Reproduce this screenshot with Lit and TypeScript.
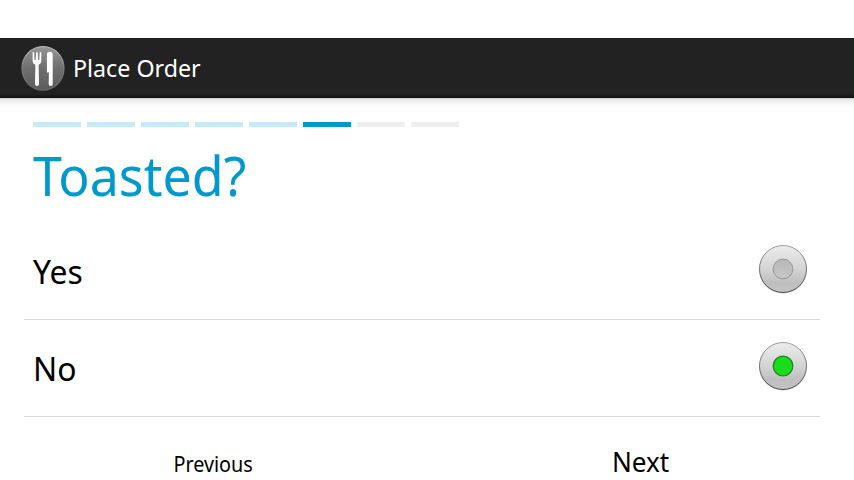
import { LitElement, html, css, svg } from "lit";
import { customElement, property, state } from "lit/decorators.js";
import { classMap } from "lit/directives/class-map.js";

@customElement("order-radio")
class OrderRadio extends LitElement {
  @property({ type: Boolean }) checked = false;

  static styles = css`
    :host { display: block; width: 50px; height: 52px; }
    svg { display: block; }
  `;

  render() {
    return html`<svg width="50" height="52" viewBox="0 0 50 52">
      <defs>
        <linearGradient id="face" x1="0" y1="0" x2="0" y2="1">
          <stop offset="0" stop-color="#ececec" />
          <stop offset="0.5" stop-color="#d4d4d4" />
          <stop offset="0.8" stop-color="#bebebe" />
          <stop offset="1" stop-color="#c4c4c4" />
        </linearGradient>
        <linearGradient id="rim" x1="0" y1="0" x2="0" y2="1">
          <stop offset="0" stop-color="#a0a0a0" />
          <stop offset="1" stop-color="#505050" />
        </linearGradient>
        <linearGradient id="well" x1="0" y1="0" x2="0" y2="1">
          <stop offset="0" stop-color="#b8b8b8" />
          <stop offset="1" stop-color="#c6c6c6" />
        </linearGradient>
      </defs>
      <circle cx="25" cy="26.5" r="23.9" fill="#000" opacity="0.25" />
      <circle cx="25" cy="26" r="23.5" fill="url(#face)" stroke="url(#rim)" stroke-width="1" />
      ${this.checked
        ? svg`<circle cx="25" cy="26" r="9.8" fill="#1bdb1f" stroke="#1a8a1c" stroke-width="1.3" />`
        : svg`<circle cx="25" cy="26" r="9.9" fill="url(#well)" stroke="#989898" stroke-width="1" />`}
    </svg>`;
  }
}

@customElement("app-root")
class AppRoot extends LitElement {
  @state() private answer = "No";
  private step = 5;
  private total = 8;

  static styles = css`
    :host {
      display: flex;
      flex-direction: column;
      box-sizing: border-box;
      width: 854px;
      height: 480px;
      padding-top: 38px;
      overflow: hidden;
      background: #fff;
      color: #000;
      font-family: "Noto Sans", "Open Sans", sans-serif;
    }
    .bar {
      display: flex;
      align-items: center;
      flex: none;
      box-sizing: border-box;
      height: 60px;
      padding-left: 21px;
      background: linear-gradient(#1a1a1a 0, #222 1px, #222 56px, #191919 58px, #141414 60px);
      color: #fff;
    }
    .logo { width: 44px; height: 46px; margin-right: 8px; }
    .bar-title {
      font-size: 24px;
      line-height: 34px;
      transform: scaleX(0.968);
      transform-origin: left;
    }
    .shade {
      flex: none;
      height: 12px;
      background: linear-gradient(#b5b5b5 0, #e2e2e2 1px, #eee 3px, #fafafa 7px, #fff 12px);
    }
    .steps { display: flex; gap: 6px; flex: none; margin: 12px 0 0 33px; }
    .step { width: 48px; height: 5px; background: #eee; }
    .done { background: #c5eaf8; }
    .now { background: #0099cc; }
    .question {
      flex: none;
      margin: 18px 0 18px 33px;
      font-size: 54px;
      line-height: 60px;
      font-weight: 400;
      color: #0099cc;
      transform: scaleX(0.962);
      transform-origin: left;
    }
    .row {
      display: flex;
      align-items: center;
      justify-content: space-between;
      flex: none;
      height: 96px;
      margin: 0 34px 0 24px;
      padding: 0 12px 0 9px;
      border-bottom: 1px solid #d9d9d9;
    }
    .label {
      padding-top: 2px;
      font-size: 33px;
      line-height: 46px;
      transform: scaleX(0.965);
      transform-origin: left;
    }
    .radio { margin-bottom: 4px; }
    .foot {
      display: grid;
      grid-template-columns: 1fr 1fr;
      align-items: baseline;
      justify-items: center;
      padding-top: 25px;
      line-height: 40px;
    }
    .prev { font-size: 21px; transform: scaleX(0.943); }
    .next { font-size: 27px; transform: scaleX(0.968); }
  `;

  render() {
    return html`
      <header class="bar">
        <svg class="logo" viewBox="0 0 44 46">
          <defs>
            <linearGradient id="disc" x1="0" y1="0" x2="0" y2="1">
              <stop offset="0" stop-color="#979797" />
              <stop offset="0.5" stop-color="#6e6e6e" />
              <stop offset="1" stop-color="#5c5c5c" />
            </linearGradient>
            <linearGradient id="edge" x1="0" y1="0" x2="0" y2="1">
              <stop offset="0" stop-color="#bcbcbc" />
              <stop offset="0.5" stop-color="#808080" />
              <stop offset="1" stop-color="#666" />
            </linearGradient>
          </defs>
          <ellipse cx="22" cy="23.3" rx="21" ry="21.8" fill="url(#disc)" stroke="url(#edge)" stroke-width="1.2" />
          <path fill="#fff" d="M11.6 7.5q.8-.8 1.6 0l.3 7.5h1.2l.4-7.5q.8-.8 1.6 0l.4 7.5h1.2l.4-7.5q.8-.8 1.6 0V15.500q0 3.200-2.700 4.200L18 39.300q-.2 1.700-2 1.700t-2-1.700l.4-19.600q-2.800-1-2.800-4.200Z" />
          <path fill="#fff" d="M25.900 9.500q0-2.700 2.900-2.700 2.900 0 2.900 2.900V39.200q0 1.800-2 1.800t-2-1.800l.2-11.600h-2Z" />
        </svg>
        <span class="bar-title">Place Order</span>
      </header>
      <div class="shade"></div>
      <div class="steps">
        ${Array.from({ length: this.total }, (_, i) => html`
          <div class=${classMap({ step: true, done: i < this.step, now: i === this.step })}></div>`)}
      </div>
      <h1 class="question">Toasted?</h1>
      ${["Yes", "No"].map((option) => html`
        <div class="row" @click=${() => (this.answer = option)}>
          <span class="label">${option}</span>
          <order-radio class="radio" ?checked=${this.answer === option}></order-radio>
        </div>`)}
      <footer class="foot">
        <span class="prev">Previous</span>
        <span class="next">Next</span>
      </footer>
    `;
  }
}
